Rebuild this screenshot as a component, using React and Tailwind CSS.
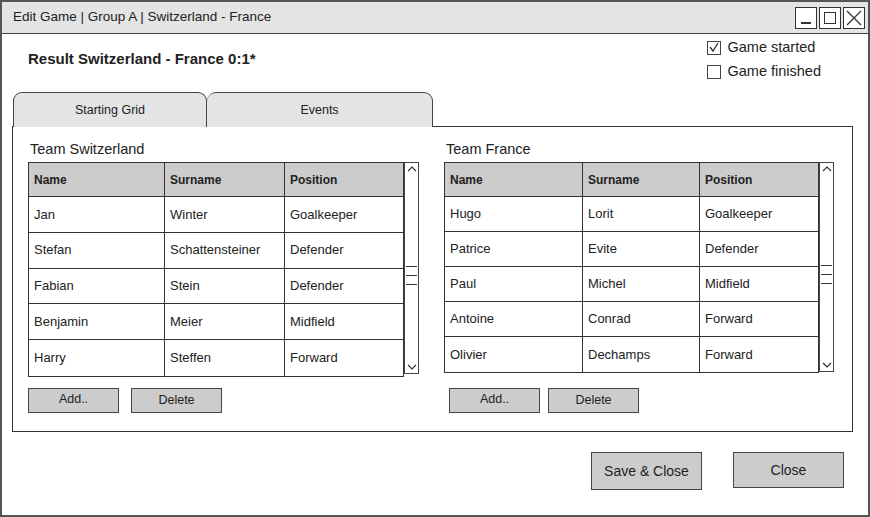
import React from 'react';

const font = { fontFamily: '"Comic Sans MS", "Liberation Sans", sans-serif' };

const swiss = [
  ['Jan', 'Winter', 'Goalkeeper'],
  ['Stefan', 'Schattensteiner', 'Defender'],
  ['Fabian', 'Stein', 'Defender'],
  ['Benjamin', 'Meier', 'Midfield'],
  ['Harry', 'Steffen', 'Forward'],
];

const france = [
  ['Hugo', 'Lorit', 'Goalkeeper'],
  ['Patrice', 'Evite', 'Defender'],
  ['Paul', 'Michel', 'Midfield'],
  ['Antoine', 'Conrad', 'Forward'],
  ['Olivier', 'Dechamps', 'Forward'],
];

function Scrollbar({ height }) {
  return (
    <div className={`w-[15px] ${height} border border-[#444] flex flex-col justify-between items-center py-[2px]`}>
      <svg width="10" height="7" viewBox="0 0 10 7"><path d="M1 6 L5 2 L9 6" fill="none" stroke="#333" strokeWidth="1.2" /></svg>
      <div className="flex flex-col gap-[8px] w-full px-[1px] pt-[14px]">
        <div className="h-px bg-[#333]" />
        <div className="h-px bg-[#333]" />
        <div className="h-px bg-[#333]" />
      </div>
      <svg width="10" height="7" viewBox="0 0 10 7"><path d="M1 1 L5 5 L9 1" fill="none" stroke="#333" strokeWidth="1.2" /></svg>
    </div>
  );
}

function Team({ title, rows, cols, rowH, scrollH, btnClass, btnGap }) {
  return (
    <div className="flex flex-col">
      <div className="text-[14.5px] text-[#222] h-[21px] leading-[16px] pl-[2px]">{title}</div>
      <div className="flex">
        <div className="border-[1.5px] border-[#333]">
          <div className="flex bg-[#cccccc] h-[34px] items-center text-[12px] font-bold text-[#222] border-b-[1.5px] border-[#333]">
            {['Name', 'Surname', 'Position'].map((h, i) => (
              <div key={h} className={`${cols[i]} h-full flex items-center pl-[5px] ${i < 2 ? 'border-r-[1.5px] border-[#333]' : ''}`}>{h}</div>
            ))}
          </div>
          {rows.map((r, ri) => (
            <div key={ri} className={`flex ${rowH} items-center text-[13px] text-[#222] ${ri < rows.length - 1 ? 'border-b-[1.5px] border-[#333]' : ''}`}>
              {r.map((c, i) => (
                <div key={i} className={`${cols[i]} h-full flex items-center pl-[5px] ${i < 2 ? 'border-r-[1.5px] border-[#333]' : ''}`}>{c}</div>
              ))}
            </div>
          ))}
        </div>
        <Scrollbar height={scrollH} />
      </div>
      <div className={`flex ${btnGap} ${btnClass}`}>
        <button className="w-[91px] h-[25px] bg-[#cccccc] border-[1.5px] border-[#444] text-[12.5px] text-[#222] pb-[3px]">Add..</button>
        <button className="w-[91px] h-[25px] bg-[#cccccc] border-[1.5px] border-[#444] text-[12.5px] text-[#222]">Delete</button>
      </div>
    </div>
  );
}

export default function App() {
  return (
    <div style={font} className="w-[870px] h-[517px] bg-white border-2 border-[#555] flex flex-col text-[#222]">
      {/* barre de titre */}
      <div className="h-[32px] bg-[#e4e4e4] border-b-[1.5px] border-[#444] flex items-center justify-between pl-[11px] pr-[3px] shrink-0">
        <span className="text-[13.5px]">Edit Game | Group A | Switzerland - France</span>
        <div className="flex gap-[2px]">
          <div className="w-[22px] h-[22px] bg-white border border-[#333] flex items-end justify-center pb-[4px]">
            <div className="w-[10px] h-[1.5px] bg-[#333]" />
          </div>
          <div className="w-[22px] h-[22px] bg-white border border-[#333] flex items-center justify-center">
            <div className="w-[12px] h-[12px] border-[1.5px] border-[#333]" />
          </div>
          <div className="w-[22px] h-[22px] bg-white border border-[#333] flex items-center justify-center">
            <svg width="16" height="16" viewBox="0 0 16 16"><path d="M1 1 L15 15 M15 1 L1 15" stroke="#333" strokeWidth="1.3" /></svg>
          </div>
        </div>
      </div>

      {/* en-tête résultat + cases */}
      <div className="flex justify-between h-[58px] shrink-0">
        <div className="pl-[26px] pt-[14px] text-[15px] font-bold">Result Switzerland - France 0:1*</div>
        <div className="flex flex-col gap-[7px] pt-[5px] pr-[47px] text-[14.5px]">
          <div className="flex items-center gap-[7px] h-[17px]">
            <div className="w-[14px] h-[14px] border border-[#444] flex items-center justify-center">
              <svg width="12" height="12" viewBox="0 0 12 12"><path d="M2 5 L5 9 L10 1" fill="none" stroke="#333" strokeWidth="1.3" /></svg>
            </div>
            <span>Game started</span>
          </div>
          <div className="flex items-center gap-[7px] h-[17px]">
            <div className="w-[14px] h-[14px] border border-[#444]" />
            <span>Game finished</span>
          </div>
        </div>
      </div>

      {/* onglets */}
      <div className="flex pl-[11px] h-[35px] shrink-0 relative z-10 -mb-[1px]">
        <div className="w-[194px] h-full bg-[#e4e4e4] border border-[#444] border-b-0 rounded-t-[9px] flex items-center justify-center text-[12.5px]">Starting Grid</div>
        <div className="w-[226px] h-full bg-[#e4e4e4] border border-[#444] border-b-0 border-l-0 rounded-t-[9px] flex items-center justify-center text-[12.5px]">Events</div>
      </div>

      {/* panneau */}
      <div className="ml-[10px] mr-[15px] h-[306px] border-[1.5px] border-[#333] flex gap-[25px] pl-[15px] pt-[14px] shrink-0">
        <Team title="Team Switzerland" rows={swiss} cols={['w-[136px]', 'w-[120px]', 'w-[118px]']} rowH="h-[35.8px]" scrollH="h-[212px]" btnClass="mt-[11px]" btnGap="gap-[12px]" />
        <Team title="Team France" rows={france} cols={['w-[138px]', 'w-[117px]', 'w-[118px]']} rowH="h-[35px]" scrollH="h-[210px]" btnClass="ml-[5px] mt-[15px]" btnGap="gap-[8px]" />
      </div>

      {/* boutons du bas */}
      <div className="flex justify-end gap-[31px] pr-[24px] pt-[20px]">
        <button className="w-[111px] h-[38px] bg-[#cccccc] border-[1.5px] border-[#444] text-[14px]">Save &amp; Close</button>
        <button className="w-[111px] h-[36px] bg-[#cccccc] border-[1.5px] border-[#444] text-[14px]">Close</button>
      </div>
    </div>
  );
}
